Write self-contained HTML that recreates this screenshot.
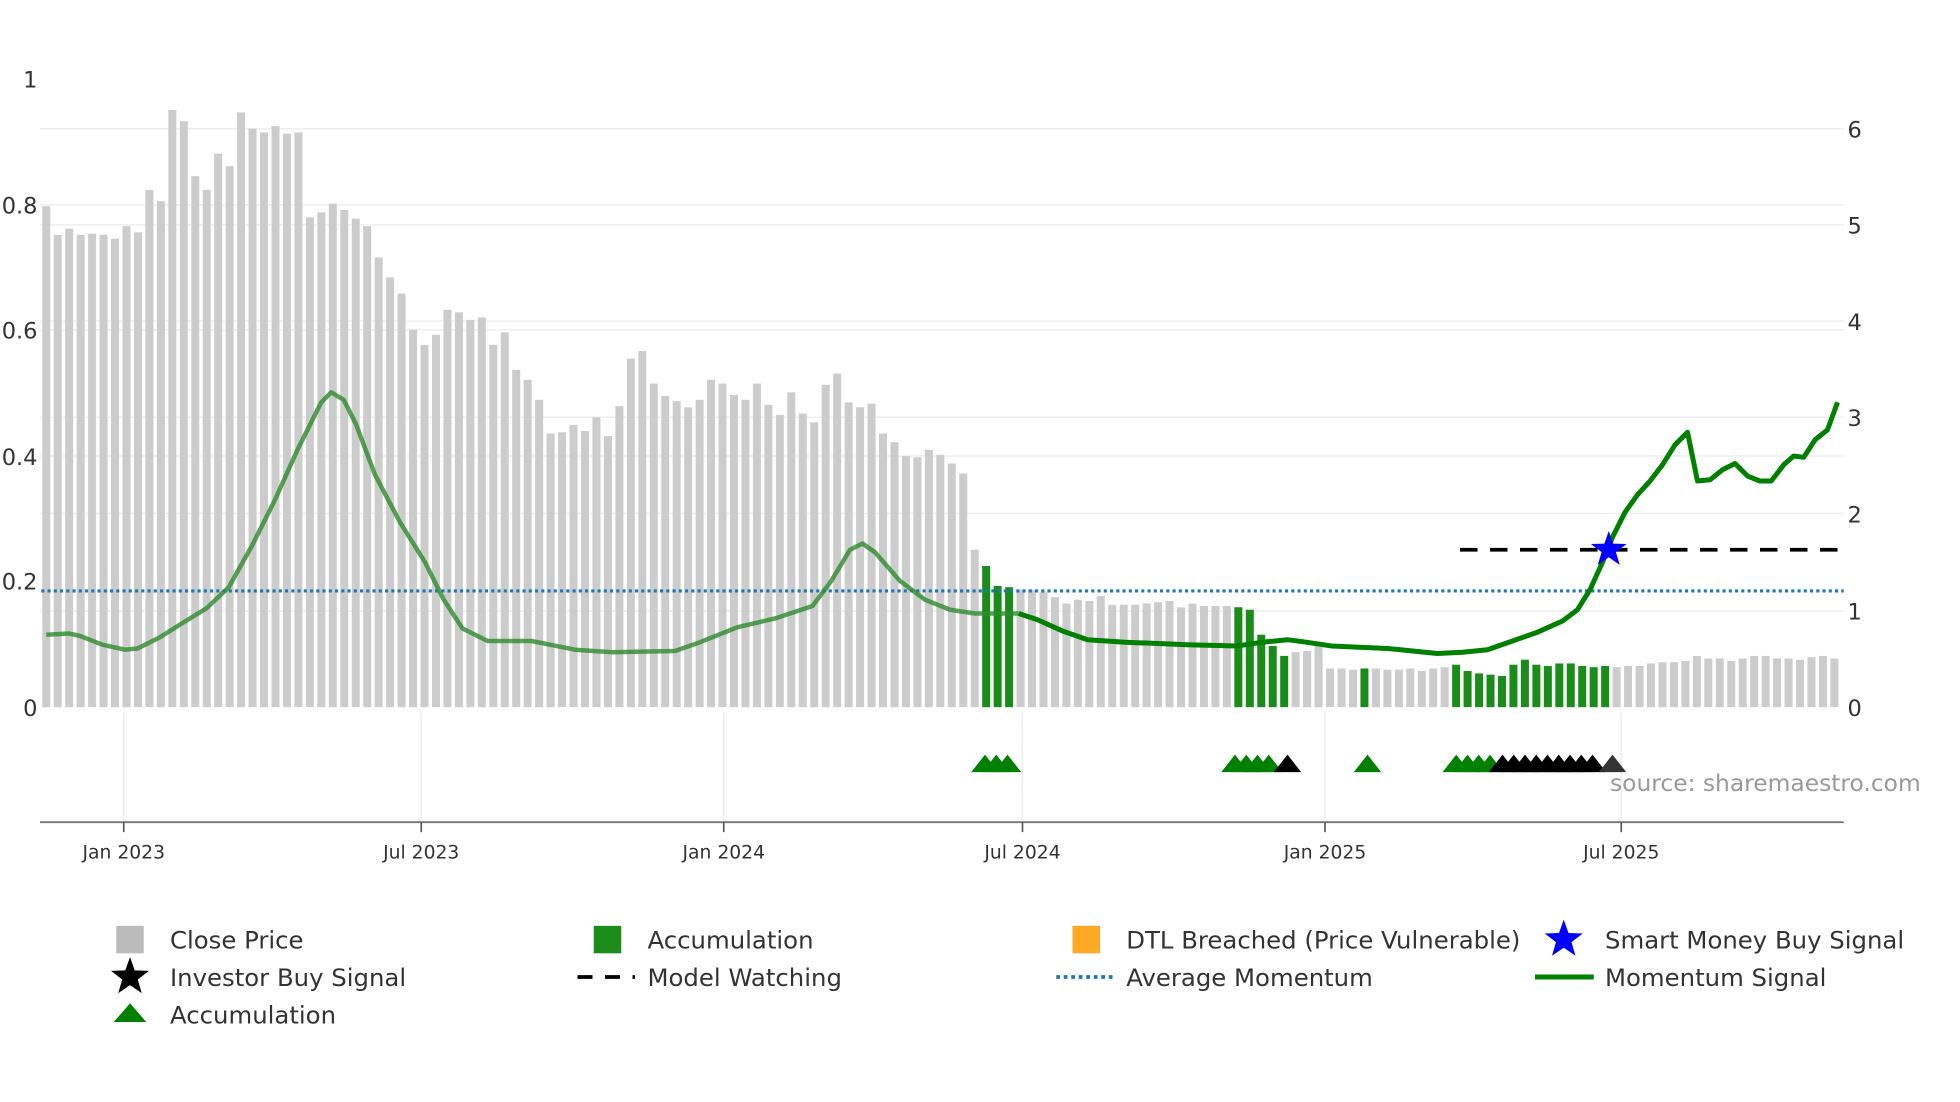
<!DOCTYPE html>
<html><head><meta charset="utf-8"><style>
html,body{margin:0;padding:0;background:#fff;}
svg{display:block;font-family:"DejaVu Sans","Liberation Sans",sans-serif;}
</style></head><body>
<svg id="s" width="1960" height="1102" viewBox="0 0 1568 882" preserveAspectRatio="none" xmlns="http://www.w3.org/2000/svg">
<g stroke="#eceef2" stroke-width="1.2">
<line x1="32" y1="103" x2="1475" y2="103"/><line x1="32" y1="180" x2="1475" y2="180"/>
<line x1="32" y1="257" x2="1475" y2="257"/><line x1="32" y1="334" x2="1475" y2="334"/>
<line x1="32" y1="411" x2="1475" y2="411"/><line x1="32" y1="489" x2="1475" y2="489"/>
<line x1="32" y1="164" x2="1475" y2="164"/><line x1="32" y1="264" x2="1475" y2="264"/>
<line x1="32" y1="365" x2="1475" y2="365"/>
<line x1="99" y1="570" x2="99" y2="658"/><line x1="337" y1="570" x2="337" y2="658"/>
<line x1="579" y1="570" x2="579" y2="658"/><line x1="818" y1="570" x2="818" y2="658"/>
<line x1="1060" y1="570" x2="1060" y2="658"/><line x1="1297" y1="570" x2="1297" y2="658"/>
</g>
<g id="bars"></g>
<line x1="33" y1="473" x2="1475" y2="473" stroke="#1f77b4" stroke-width="2.5" stroke-dasharray="2.5,2.5"/>
<polyline id="m1" fill="none" stroke="#2e8b2e" stroke-opacity="0.8" stroke-width="3.6" stroke-linejoin="round"/>
<polyline id="m2" fill="none" stroke="#008000" stroke-width="4" stroke-linejoin="round"/>
<line x1="1168" y1="440" x2="1472" y2="440" stroke="#000" stroke-width="3" stroke-dasharray="14,10"/>
<polygon id="star" fill="#0000ff"/>
<g id="tris"></g>
<line x1="32" y1="658" x2="1475" y2="658" stroke="#777" stroke-width="1.5"/>
<g stroke="#555" stroke-width="1.3">
<line x1="99" y1="658" x2="99" y2="666"/><line x1="337" y1="658" x2="337" y2="666"/>
<line x1="579" y1="658" x2="579" y2="666"/><line x1="818" y1="658" x2="818" y2="666"/>
<line x1="1060" y1="658" x2="1060" y2="666"/><line x1="1297" y1="658" x2="1297" y2="666"/>
</g>
<g font-size="15" fill="#333" text-anchor="middle">
<text x="99" y="687">Jan 2023</text><text x="337" y="687">Jul 2023</text>
<text x="579" y="687">Jan 2024</text><text x="818" y="687">Jul 2024</text>
<text x="1060" y="687">Jan 2025</text><text x="1297" y="687">Jul 2025</text>
</g>
<g font-size="18" fill="#333" text-anchor="end">
<text x="30" y="70">1</text><text x="30" y="171">0.8</text><text x="30" y="271">0.6</text>
<text x="30" y="372">0.4</text><text x="30" y="472">0.2</text><text x="30" y="573">0</text>
</g>
<g font-size="18" fill="#333">
<text x="1478" y="110">6</text><text x="1478" y="187">5</text><text x="1478" y="264">4</text>
<text x="1478" y="341">3</text><text x="1478" y="418">2</text><text x="1478" y="496">1</text><text x="1478" y="573">0</text>
</g>
<text x="1288" y="633" font-size="18.7" fill="#999">source: sharemaestro.com</text>
<g font-size="19.5" fill="#333">
<rect x="93" y="741" width="22" height="22" fill="#bbbbbb"/><text x="136" y="759">Close Price</text>
<rect x="475" y="741" width="22" height="22" fill="#1a8c1a"/><text x="518" y="759">Accumulation</text>
<rect x="858" y="741" width="22" height="22" fill="#ffa824"/><text x="901" y="759">DTL Breached (Price Vulnerable)</text>
<polygon id="lstar" fill="#0000ff"/><text x="1284" y="759">Smart Money Buy Signal</text>
<polygon id="lstar2" fill="#000"/><text x="136" y="789">Investor Buy Signal</text>
<line x1="462" y1="782" x2="508" y2="782" stroke="#000" stroke-width="3" stroke-dasharray="12,10"/><text x="518" y="789">Model Watching</text>
<line x1="845" y1="782" x2="890" y2="782" stroke="#1f77b4" stroke-width="3" stroke-dasharray="3,3"/><text x="901" y="789">Average Momentum</text>
<line x1="1228" y1="782" x2="1275" y2="782" stroke="#008000" stroke-width="4"/><text x="1284" y="789">Momentum Signal</text>
<polygon points="104,803 117,818 91,818" fill="#008000"/><text x="136" y="819">Accumulation</text>
</g>
</svg>
<script>
var NS="http://www.w3.org/2000/svg";
function el(p,t,a){var e=document.createElementNS(NS,t);for(var k in a)e.setAttribute(k,a[k]);p.appendChild(e);return e;}
var tops=[165,188,183,188,187,188,191,181,186,152,161,88,97,141,152,123,133,90,103,106,101,107,106,174,170,163,168,175,181,206,222,235,264,276,268,248,250,256,254,276,266,296,304,320,347,346,340,345,334,349,325,287,281,307,317,321,326,320,304,307,316,320,307,324,332,314,331,338,308,299,322,326,323,347,354,365,366,360,364,371,379,440,453,469,470,472,472,474,478,483,480,481,477,484,484,484,483,482,481,486,483,485,485,485,486,488,508,517,525,522,521,516,535,535,536,535,535,536,536,535,537,535,534,532,537,539,540,541,532,528,532,533,531,531,533,534,533,534,533,533,531,530,530,529,525,527,527,529,527,525,525,527,527,528,526,525,527];
var green=function(i){return (i>=82&&i<=84)||(i>=104&&i<=108)||i==115||(i>=123&&i<=136);};
var bars=document.getElementById('bars');
for(var i=0;i<tops.length;i++){var x=37+i*9.17;el(bars,'rect',{x:x-3.2,y:tops[i],width:6.4,height:566-tops[i],fill:green(i)?'#1a8c1a':'#cccccc'});}
var pts=[[37,508],[55,507],[64,509],[82,516],[100,520],[110,519],[128,510],[147,498],[165,487],[183,470],[202,436],[220,400],[238,360],[257,322],[265,314],[275,320],[285,340],[300,380],[320,418],[340,450],[355,480],[370,503],[390,513],[425,513],[460,520],[490,522],[540,521],[560,514],[590,502],[620,495],[650,485],[665,465],[680,440],[690,435],[700,442],[720,465],[740,480],[760,488],[780,491],[815,491]];
var pts2=[[815,491],[830,496],[850,505],[870,512],[900,514],[950,516],[990,517],[1010,514],[1030,512],[1045,514],[1065,517],[1110,519],[1130,521],[1150,523],[1170,522],[1190,520],[1210,513],[1230,506],[1250,497],[1262,488],[1272,472],[1282,450],[1290,430],[1300,410],[1310,396],[1320,385],[1330,372],[1340,356],[1350,346],[1358,385],[1368,384],[1378,376],[1388,371],[1398,381],[1408,385],[1417,385],[1427,372],[1435,365],[1443,366],[1452,352],[1462,344],[1470,322]];
document.getElementById('m1').setAttribute('points',pts.map(function(p){return p.join(',')}).join(' '));
document.getElementById('m2').setAttribute('points',pts2.map(function(p){return p.join(',')}).join(' '));
function star(cx,cy,R,r){var s=[];for(var k=0;k<10;k++){var a=-Math.PI/2+k*Math.PI/5,rr=k%2?r:R;s.push((cx+rr*Math.cos(a)).toFixed(1)+','+(cy+rr*Math.sin(a)).toFixed(1));}return s.join(' ');}
document.getElementById('star').setAttribute('points',star(1287,440,15,6));
document.getElementById('lstar').setAttribute('points',star(1251,752,16,6.5));
document.getElementById('lstar2').setAttribute('points',star(104,782,16,6.5));
var tris=document.getElementById('tris');
function tri(x,c){el(tris,'polygon',{points:(x)+',604 '+(x+11)+',618 '+(x-11)+',618',fill:c});}
[788,797,806,988,997,1006,1015].forEach(function(x){tri(x,'#008000');});
tri(1030,'#000');tri(1094,'#008000');
[1165,1174,1183,1192].forEach(function(x){tri(x,'#008000');});
for(var x=1202;x<=1282;x+=9)tri(x,'#000');
tri(1290,'#333');
</script>
</body></html>
